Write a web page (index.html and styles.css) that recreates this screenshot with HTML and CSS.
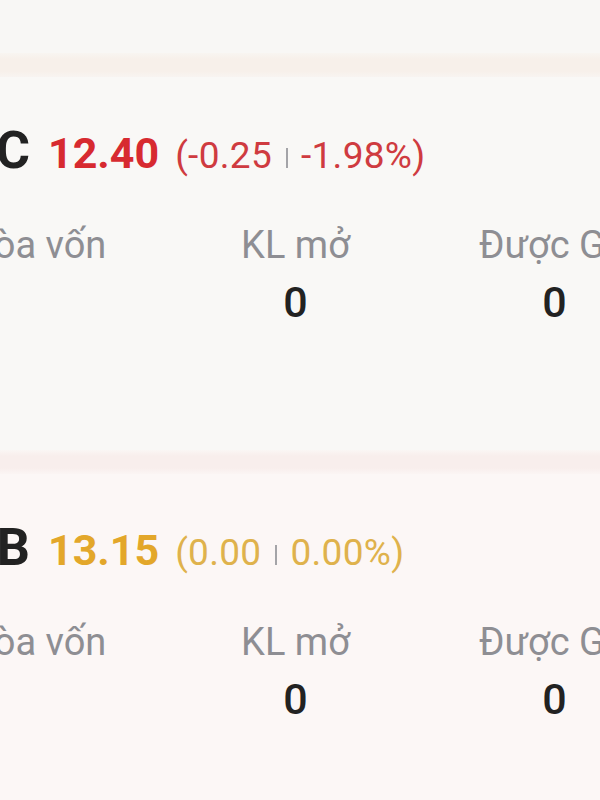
FILE: index.html
```html
<!DOCTYPE html>
<html lang="vi">
<head>
    <meta charset="UTF-8">
    <title>Danh mục</title>
    <link rel="stylesheet" href="styles.css">
</head>
<body>
    <div class="top"></div>
    <div class="divider"></div>

    <section class="card">
        <div class="head">
            <span class="ticker">VIC</span>
            <span class="price down">12.40</span>
            <span class="change down">(-0.25<i class="bar"></i>-1.98%)</span>
        </div>
        <div class="stats">
            <div class="stat">
                <div class="label">Hòa vốn</div>
                <div class="value"></div>
            </div>
            <div class="stat">
                <div class="label">KL mở</div>
                <div class="value">0</div>
            </div>
            <div class="stat">
                <div class="label">Được GD</div>
                <div class="value">0</div>
            </div>
        </div>
    </section>

    <div class="divider divider-alt"></div>

    <section class="card card-alt">
        <div class="head">
            <span class="ticker">TCB</span>
            <span class="price ref">13.15</span>
            <span class="change ref">(0.00<i class="bar"></i>0.00%)</span>
        </div>
        <div class="stats">
            <div class="stat">
                <div class="label">Hòa vốn</div>
                <div class="value"></div>
            </div>
            <div class="stat">
                <div class="label">KL mở</div>
                <div class="value">0</div>
            </div>
            <div class="stat">
                <div class="label">Được GD</div>
                <div class="value">0</div>
            </div>
        </div>
    </section>
</body>
</html>
```

FILE: styles.css
```css
body { margin: 0; overflow: hidden; background: #f9f8f6; font-family: Roboto, "Noto Sans", sans-serif; }

.top { height: 53px; background: #f8f7f5; }
.divider { height: 24px; background: linear-gradient(#f8f5f1, #f7f0ea 25%, #f7f0ea 75%, #f8f4f1); }
.divider-alt { background: linear-gradient(#faf6f4, #f8eeec 25%, #f8eeec 75%, #fbf5f4); }

.card { height: 373px; padding-top: 44px; box-sizing: border-box; background: #f9f8f6; }
.card-alt { background: #fcf7f6; }

.head { display: flex; align-items: baseline; height: 60px; line-height: 60px; white-space: nowrap; }
.ticker { width: 120px; margin-left: -90px; text-align: right; font-size: 52px; font-weight: 700; color: #222; }
.price { margin-left: 18px; font-size: 43px; font-weight: 700; }
.change { margin-left: 16px; font-size: 37px; letter-spacing: 0.3px; }
.bar { display: inline-block; width: 2px; height: 20px; margin: 0 13px 0 14px; background: #a4a4a8; vertical-align: 0; }

.down { color: #d72a30; }
.change.down { color: #cf3b40; }
.ref { color: #e3a72a; }
.change.ref { color: #dfb24c; }

.stats { display: grid; grid-template-columns: repeat(3, 259px); margin: 42px 0 0 -93px; text-align: center; }
.label { height: 44px; line-height: 44px; font-size: 38px; color: #8e8e93; white-space: nowrap; }
.value { height: 44px; margin-top: 13px; line-height: 44px; font-size: 43px; font-weight: 500; color: #222; }
```
